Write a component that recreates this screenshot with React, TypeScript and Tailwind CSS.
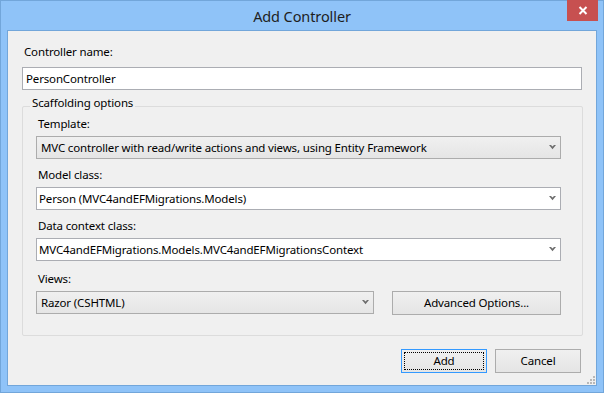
import React from "react";

const Chevron = () => (
  <svg width="7" height="5" viewBox="0 0 7 5" className="block">
    <polygon points="0,0 2,0 3.5,1.6 5,0 7,0 3.5,4.2" fill="#6d6d6d" />
  </svg>
);

function Label({ children }: { children: React.ReactNode }) {
  return <div className="h-4 leading-4 ml-[15px] text-black">{children}</div>;
}

function EditCombo({ text }: { text: string }) {
  return (
    <div className="ml-[13px] mt-[4px] w-[525px] h-[23px] bg-white border border-[#abadb3] flex items-center pl-[2px] pr-[4px]">
      <span className="flex-1 leading-4 whitespace-nowrap">{text}</span>
      <Chevron />
    </div>
  );
}

function GrayCombo({ text, width }: { text: string; width: string }) {
  return (
    <div
      className={`${width} h-[23px] border border-[#acacac] bg-gradient-to-b from-[#f0f0f0] to-[#e5e5e5] flex items-center pl-[4px] pr-[4px]`}
    >
      <span className="flex-1 leading-4 whitespace-nowrap">{text}</span>
      <Chevron />
    </div>
  );
}

export default function App() {
  return (
    <div
      className="relative w-[604px] h-[393px] bg-[#8fc3f8] border border-[#72a6da] flex flex-col text-[11.5px] tracking-[-0.15px] text-black"
      style={{ fontFamily: '"Segoe UI", "Noto Sans", "Open Sans", sans-serif' }}
    >
      {/* Title bar */}
      <div className="relative h-[29px] flex items-center justify-center">
        <span className="text-[14.5px] leading-5 tracking-[-0.1px] text-[#1e1e1e]">Add Controller</span>
        <div className="absolute right-[5px] top-[-1px] w-[31px] h-[21px] bg-[#c75050] flex items-center justify-center">
          <svg width="10" height="9" viewBox="0 0 10 9">
            <path d="M1.5 1 L8.5 8 M8.5 1 L1.5 8" stroke="#ffffff" strokeWidth="2" />
          </svg>
        </div>
      </div>

      {/* Client area */}
      <div className="relative mx-[6px] h-[356px] border border-[#72a6da] bg-[#f0f0f0]">
        <div className="flex flex-col pl-[14px] pt-[13px]">
          <div className="h-4 leading-4 pl-[2px]">Controller name:</div>
          <div className="mt-[7px] w-[560px] h-[23px] bg-white border border-[#abadb3] flex items-center pl-[3px]">
            <span className="leading-4">PersonController</span>
          </div>

          {/* Group box */}
          <div className="mt-[16px] w-[561px] h-[230px] border border-[#dcdcdc] rounded-[2px] flex flex-col">
            <span className="-mt-[12px] ml-[7px] self-start px-[2px] h-4 leading-4 bg-[#f0f0f0]">
              Scaffolding options
            </span>

            <div className="mt-[5px]">
              <Label>Template:</Label>
            </div>
            <div className="ml-[13px] mt-[4px]">
              <GrayCombo
                width="w-[525px]"
                text="MVC controller with read/write actions and views, using Entity Framework"
              />
            </div>

            <div className="mt-[8px]">
              <Label>Model class:</Label>
            </div>
            <EditCombo text="Person (MVC4andEFMigrations.Models)" />

            <div className="mt-[8px]">
              <Label>Data context class:</Label>
            </div>
            <EditCombo text="MVC4andEFMigrations.Models.MVC4andEFMigrationsContext" />

            <div className="mt-[10px]">
              <Label>Views:</Label>
            </div>
            <div className="ml-[13px] mt-[4px] flex items-start">
              <GrayCombo width="w-[338px]" text="Razor (CSHTML)" />
              <button className="ml-[18px] w-[169px] h-[24px] border border-[#acacac] bg-gradient-to-b from-[#f0f0f0] to-[#e5e5e5] flex items-center justify-center leading-4">
                Advanced Options...
              </button>
            </div>
          </div>

          {/* Buttons */}
          <div className="mt-[13px] flex ml-[379px]">
            <button className="relative w-[86px] h-[24px] border border-[#3399ff] bg-gradient-to-b from-[#f0f0f0] to-[#e5e5e5] flex items-center justify-center leading-4">
              <span className="absolute inset-[2px] border border-dotted border-black" />
              Add
            </button>
            <button className="ml-[8px] w-[86px] h-[24px] border border-[#acacac] bg-gradient-to-b from-[#f0f0f0] to-[#e5e5e5] flex items-center justify-center leading-4">
              Cancel
            </button>
          </div>
        </div>

        {/* Resize grip */}
        <svg className="absolute right-[1px] bottom-[1px]" width="8" height="8" viewBox="0 0 8 8">
          <rect x="6" y="0" width="2" height="2" fill="#b8b8b8" />
          <rect x="3" y="3" width="2" height="2" fill="#b8b8b8" />
          <rect x="6" y="3" width="2" height="2" fill="#b8b8b8" />
          <rect x="0" y="6" width="2" height="2" fill="#b8b8b8" />
          <rect x="3" y="6" width="2" height="2" fill="#b8b8b8" />
          <rect x="6" y="6" width="2" height="2" fill="#b8b8b8" />
        </svg>
      </div>
    </div>
  );
}
